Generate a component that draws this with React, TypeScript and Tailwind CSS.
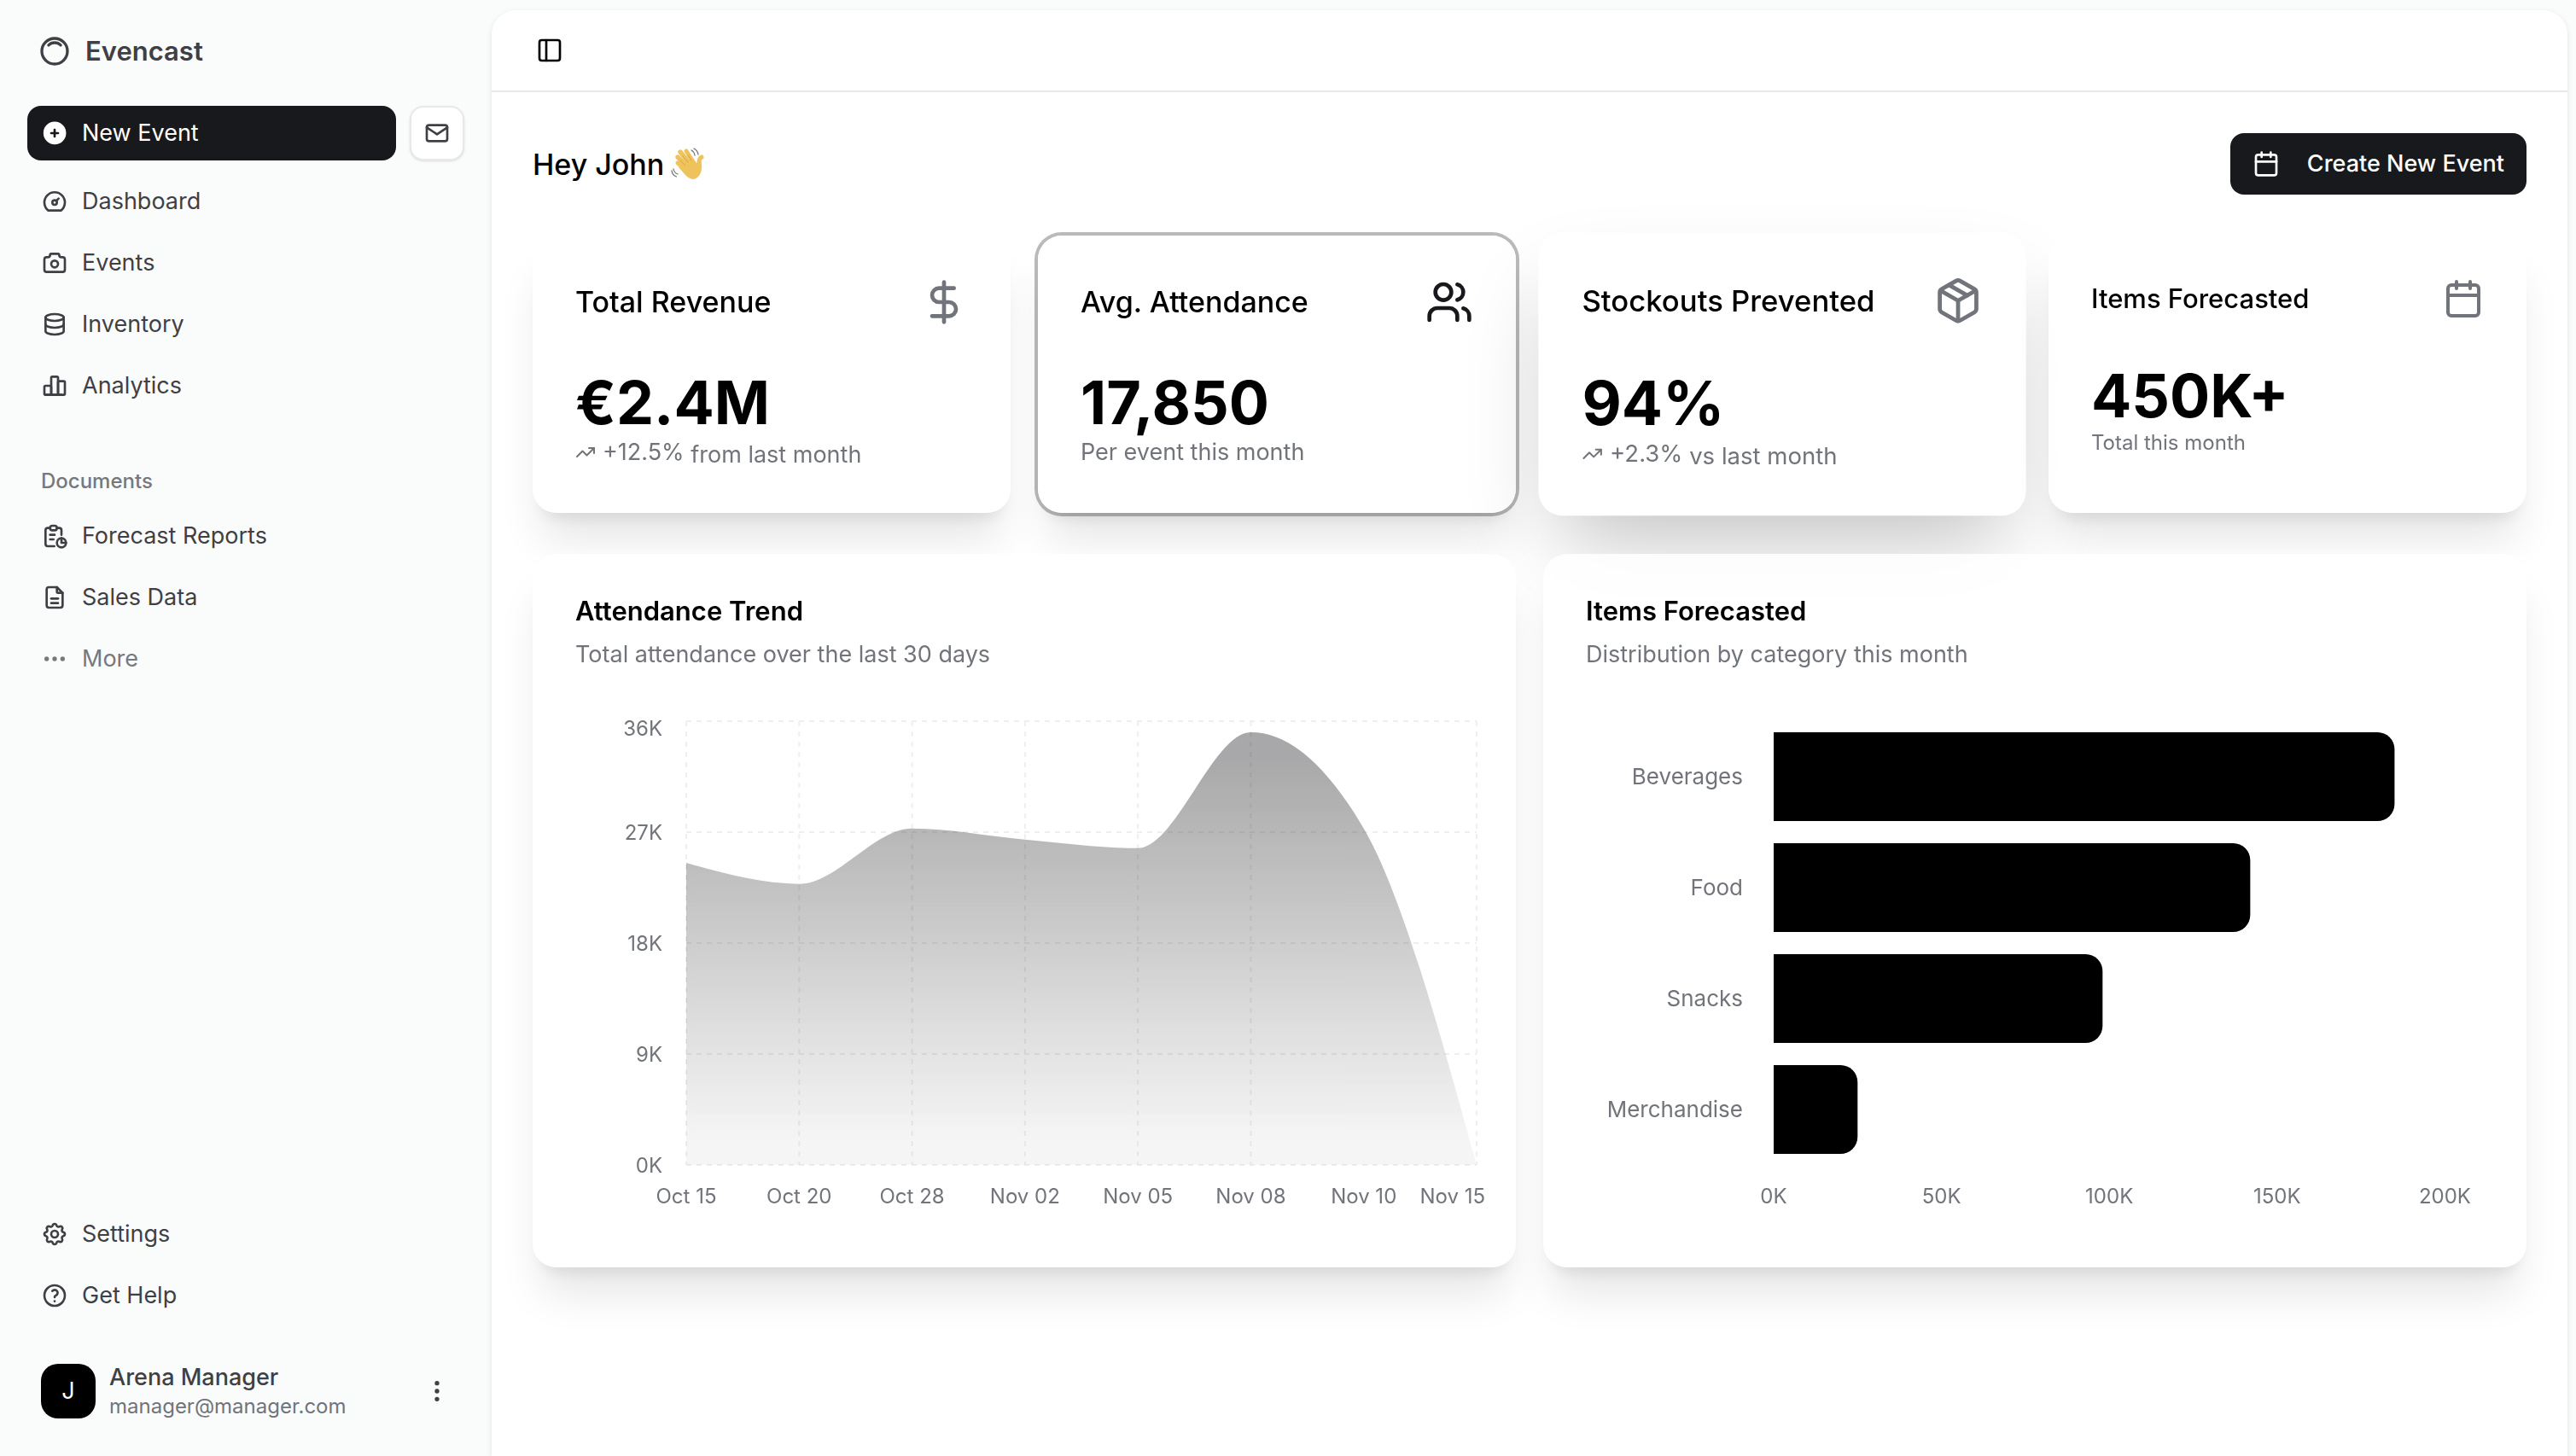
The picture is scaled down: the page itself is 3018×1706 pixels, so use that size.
import type { ReactNode } from 'react';
import type { IconType } from 'react-icons';
import {
  TbCamera,
  TbChartBar,
  TbCirclePlusFilled,
  TbDashboard,
  TbDatabase,
  TbDots,
  TbDotsVertical,
  TbFileDescription,
  TbHelp,
  TbInnerShadowTop,
  TbMail,
  TbReport,
  TbSettings,
} from 'react-icons/tb';
import { Calendar, DollarSign, Package, PanelLeft, TrendingUp, Users } from 'lucide-react';

const mainNav = [
  { title: 'Dashboard', icon: TbDashboard },
  { title: 'Events', icon: TbCamera },
  { title: 'Inventory', icon: TbDatabase },
  { title: 'Analytics', icon: TbChartBar },
];

const documents = [
  { title: 'Forecast Reports', icon: TbReport },
  { title: 'Sales Data', icon: TbFileDescription },
];

const secondaryNav = [
  { title: 'Settings', icon: TbSettings },
  { title: 'Get Help', icon: TbHelp },
];

const attendance = [
  { date: 'Oct 15', value: 24.5 },
  { date: 'Oct 20', value: 22.8 },
  { date: 'Oct 28', value: 27.3 },
  { date: 'Nov 02', value: 26.4 },
  { date: 'Nov 05', value: 25.7 },
  { date: 'Nov 08', value: 35.1 },
  { date: 'Nov 10', value: 27.3 },
  { date: 'Nov 15', value: 0 },
];

const categories = [
  { name: 'Beverages', value: 185 },
  { name: 'Food', value: 142 },
  { name: 'Snacks', value: 98 },
  { name: 'Merchandise', value: 25 },
];

function NavItem({ title, icon: Icon }: { title: string; icon: IconType }) {
  return (
    <li>
      <a href="#" className="flex h-16 items-center gap-4 rounded-2xl px-4 text-[27px]">
        <Icon className="size-8" />
        {title}
      </a>
    </li>
  );
}

function Sidebar() {
  return (
    <aside className="flex h-screen w-[576px] shrink-0 flex-col px-8 pt-7 pb-7 text-[#3f3f46]">
      <a href="#" className="flex h-16 items-center gap-4 px-3 text-[31px] font-semibold">
        <TbInnerShadowTop className="size-10" />
        Evencast
      </a>

      <div className="mt-8 flex gap-4">
        <button className="flex h-16 flex-1 items-center gap-4 rounded-2xl bg-[#18191c] px-4 text-[27px] text-white">
          <TbCirclePlusFilled className="size-8" />
          New Event
        </button>
        <button
          aria-label="Inbox"
          className="flex size-16 items-center justify-center rounded-2xl border-2 border-[#e8e9e9] bg-white shadow-sm"
        >
          <TbMail className="size-8" />
        </button>
      </div>

      <nav className="mt-4 flex flex-col">
        <ul className="flex flex-col gap-2">
          {mainNav.map((item) => (
            <NavItem key={item.title} {...item} />
          ))}
        </ul>
        <h2 className="mt-12 flex h-16 items-center px-4 text-2xl font-medium text-[#77787c]">Documents</h2>
        <ul className="flex flex-col gap-2">
          {documents.map((item) => (
            <NavItem key={item.title} {...item} />
          ))}
          <li>
            <button className="flex h-16 w-full items-center gap-4 rounded-2xl px-4 text-[27px] text-[#77787c]">
              <TbDots className="size-8" />
              More
            </button>
          </li>
        </ul>
      </nav>

      <ul className="mt-auto flex flex-col gap-2">
        {secondaryNav.map((item) => (
          <NavItem key={item.title} {...item} />
        ))}
      </ul>

      <button className="mt-8 flex h-24 items-center gap-4 px-4 text-left">
        <span className="flex size-16 items-center justify-center rounded-[20px] bg-black text-[27px] text-white">J</span>
        <span className="flex flex-1 flex-col">
          <span className="text-[27px] leading-9 font-medium">Arena Manager</span>
          <span className="text-2xl text-[#71747a]">manager@manager.com</span>
        </span>
        <TbDotsVertical className="size-8" />
      </button>
    </aside>
  );
}

function WavingHand() {
  return (
    <svg viewBox="0 0 40 40" className="size-10" role="img" aria-label="Waving hand">
      <g stroke="#efc35c" strokeLinecap="round" fill="none">
        <path d="M8 19 20 30" strokeWidth="5" />
        <path d="M8 12 21 25" strokeWidth="5.4" />
        <path d="M11 6 24 22" strokeWidth="5.4" />
        <path d="M18 5 27 19" strokeWidth="5" />
        <path d="M36 12C32 14 33 19 33 22" strokeWidth="5" />
      </g>
      <path d="M13 22 24 13 30 19 35.5 17C37 25 36 32 31 36 26 40 21 37 17 33L9 24Z" fill="#efc35c" />
      <path d="M14 11 20 18M11 16 17 22M20 10 24 16" stroke="#d9a63c" strokeWidth="1" fill="none" strokeLinecap="round" />
      <path
        d="M24 4C26 5 27.5 7 28 10M27 2C30 3.5 31.5 6 32 9M3 26C3.5 29 5 31 8 32M1 28C1.5 32 3.5 34 6.5 35"
        stroke="#777"
        strokeWidth="1.3"
        fill="none"
        strokeLinecap="round"
      />
    </svg>
  );
}

function Trend({ change, children }: { change: string; children: ReactNode }) {
  return (
    <>
      <span className="inline-flex items-center gap-2">
        <TrendingUp className="size-6" />
        {change}
      </span>{' '}
      {children}
    </>
  );
}

// Translucent card, so the shadow of the card behind tints its edge
const card = 'relative rounded-[28px] bg-white/85 backdrop-blur-lg';
const cardShadow = 'shadow-[0_40px_50px_-10px_rgba(0,0,0,0.1),0_16px_20px_-12px_rgba(0,0,0,0.1)]';

function StatCards() {
  return (
    <div className="grid grid-cols-4 gap-8">
      <section className={`${card} p-[50px] ${cardShadow}`}>
        <div className="flex items-center justify-between">
          <h2 className="text-[34px] leading-14 font-medium">Total Revenue</h2>
          <DollarSign className="size-14 text-[#71747a]" />
        </div>
        <p className="mt-[50px] text-[70px] leading-20 font-bold">€2.4M</p>
        <p className="text-[27px] leading-9 text-[#71747a]">
          <Trend change="+12.5%">from last month</Trend>
        </p>
      </section>

      <section className={`${card} p-[50px] ring-4 ring-[#18191c]/30 ${cardShadow}`}>
        <div className="flex items-center justify-between">
          <h2 className="text-[34px] leading-14 font-medium">Avg. Attendance</h2>
          <Users className="size-14 text-[#18191c]" />
        </div>
        <p className="mt-[50px] text-[70px] leading-20 font-bold">17,850</p>
        <p className="text-[27px] leading-9 text-[#71747a]">Per event this month</p>
      </section>

      <section className="relative scale-102 rounded-[28px] bg-white p-[50px] shadow-[0_50px_100px_-24px_rgba(0,0,0,0.25)]">
        <div className="flex items-center justify-between">
          <h2 className="text-[34px] leading-14 font-medium">Stockouts Prevented</h2>
          <Package className="size-14 text-[#71747a]" />
        </div>
        <p className="mt-[50px] text-[70px] leading-20 font-bold">94%</p>
        <p className="text-[27px] leading-9 text-[#71747a]">
          <Trend change="+2.3%">vs last month</Trend>
        </p>
      </section>

      <section className={`${card} p-[50px] ${cardShadow}`}>
        <div className="flex items-center justify-between">
          <h2 className="text-[31px] leading-12 font-medium">Items Forecasted</h2>
          <Calendar className="size-12 text-[#71747a]" />
        </div>
        <p className="mt-[50px] text-[70px] leading-20 font-bold">450K+</p>
        <p className="text-2xl leading-[30px] text-[#71747a]">Total this month</p>
      </section>
    </div>
  );
}

const AREA = { left: 130, right: 1056, top: 20, bottom: 540, max: 36 };

// Monotone cubic through the points, flat at local peaks and dips
function monotonePath(pts: { x: number; y: number }[]) {
  const n = pts.length;
  const slopes = pts.slice(1).map((p, i) => (p.y - pts[i].y) / (p.x - pts[i].x));
  const tangents = pts.map((_, i) => {
    if (i === 0 || i === n - 1) return 0;
    const a = slopes[i - 1];
    const b = slopes[i];
    if (a * b <= 0) return 0;
    return Math.sign(a) * Math.min(Math.abs(a), Math.abs(b), Math.abs(a + b) / 4) * 2;
  });
  tangents[0] = (3 * slopes[0] - tangents[1]) / 2;
  tangents[n - 1] = (3 * slopes[n - 2] - tangents[n - 2]) / 2;

  let d = `M${pts[0].x},${pts[0].y}`;
  for (let i = 1; i < n; i++) {
    const dx = (pts[i].x - pts[i - 1].x) / 3;
    d += `C${pts[i - 1].x + dx},${pts[i - 1].y + dx * tangents[i - 1]} ${pts[i].x - dx},${pts[i].y - dx * tangents[i]} ${pts[i].x},${pts[i].y}`;
  }
  return d;
}

function AttendanceChart() {
  const { left, right, top, bottom, max } = AREA;
  const step = (right - left) / (attendance.length - 1);
  const points = attendance.map((d, i) => ({
    x: left + i * step,
    y: bottom - (d.value / max) * (bottom - top),
  }));
  const area = `${monotonePath(points)}L${right},${bottom}L${left},${bottom}Z`;
  const yTicks = [36, 27, 18, 9, 0];

  return (
    <svg viewBox="0 0 1066 600" className="h-auto w-full" role="img" aria-label="Attendance over the last 30 days">
      <defs>
        <linearGradient id="fillAttendance" x1="0" y1="0" x2="0" y2="1">
          <stop offset="5%" stopColor="#18191c" stopOpacity="0.38" />
          <stop offset="95%" stopColor="#18191c" stopOpacity="0.04" />
        </linearGradient>
      </defs>
      <g stroke="#eeefef" strokeWidth="2" strokeDasharray="6 6">
        {yTicks.map((t) => {
          const y = bottom - (t / max) * (bottom - top);
          return <line key={t} x1={left} x2={right} y1={y} y2={y} />;
        })}
        {points.map((p, i) => i !== 6 && <line key={i} x1={p.x} x2={p.x} y1={top} y2={bottom} />)}
      </g>
      <path d={area} fill="url(#fillAttendance)" />
      <g className="fill-[#71747a] text-2xl">
        {yTicks.map((t) => (
          <text key={t} x={102} y={t === max ? top + 17 : bottom - (t / max) * (bottom - top) + 9} textAnchor="end">
            {t}K
          </text>
        ))}
        {attendance.map((d, i) => {
          const last = i === attendance.length - 1;
          return (
            <text key={d.date} x={last ? 1066 : points[i].x} y={585} textAnchor={last ? 'end' : 'middle'}>
              {d.date}
            </text>
          );
        })}
      </g>
    </svg>
  );
}

function CategoryChart() {
  const left = 220;
  const perK = 3.932;

  return (
    <svg viewBox="0 0 1066 600" className="h-auto w-full" role="img" aria-label="Items forecasted by category">
      {categories.map((c, i) => {
        const y = 33 + i * 130;
        const w = c.value * perK;
        return (
          <g key={c.name}>
            <path d={`M${left},${y}h${w - 20}a20,20 0 0 1 20,20v64a20,20 0 0 1 -20,20h-${w - 20}Z`} />
            <text x={left - 36} y={y + 61} textAnchor="end" className="fill-[#71747a] text-[26px]">
              {c.name}
            </text>
          </g>
        );
      })}
      {[0, 50, 100, 150, 200].map((t) => (
        <text key={t} x={left + t * perK} y={585} textAnchor="middle" className="fill-[#71747a] text-2xl">
          {t}K
        </text>
      ))}
    </svg>
  );
}

function ChartCard({ title, description, children }: { title: string; description: string; children: ReactNode }) {
  return (
    <section className={`${card} pt-[50px] pr-9 pb-[60px] pl-[50px] ${cardShadow}`}>
      <h2 className="text-[31px] leading-[34px] font-semibold">{title}</h2>
      <p className="mt-[14px] text-[27px] leading-10 text-[#71747a]">{description}</p>
      <div className="mt-[38px]">{children}</div>
    </section>
  );
}

export default function App() {
  return (
    <div className="flex min-h-screen bg-[#fafcfb] font-['Inter',sans-serif] text-black">
      <Sidebar />
      <div className="mt-3 mr-[10px] min-w-0 flex-1 rounded-t-[28px] bg-white shadow-[0_2px_6px_rgba(0,0,0,0.1)]">
        <header className="flex h-24 items-center border-b-2 border-[#e8e9e9] px-[52px]">
          <button aria-label="Toggle sidebar">
            <PanelLeft className="size-8" />
          </button>
        </header>

        <main className="flex flex-col gap-12 p-12">
          <div className="flex items-center justify-between">
            <h1 className="flex items-center gap-2 text-[34px] font-medium">
              Hey John
              <WavingHand />
            </h1>
            <button className="flex h-[72px] items-center gap-8 rounded-2xl bg-[#18191c] px-[26px] text-[27px] font-medium text-white">
              <Calendar className="size-8" />
              Create New Event
            </button>
          </div>
          <StatCards />
          <div className="grid grid-cols-2 gap-8">
            <ChartCard title="Attendance Trend" description="Total attendance over the last 30 days">
              <AttendanceChart />
            </ChartCard>
            <ChartCard title="Items Forecasted" description="Distribution by category this month">
              <CategoryChart />
            </ChartCard>
          </div>
        </main>
      </div>
    </div>
  );
}
